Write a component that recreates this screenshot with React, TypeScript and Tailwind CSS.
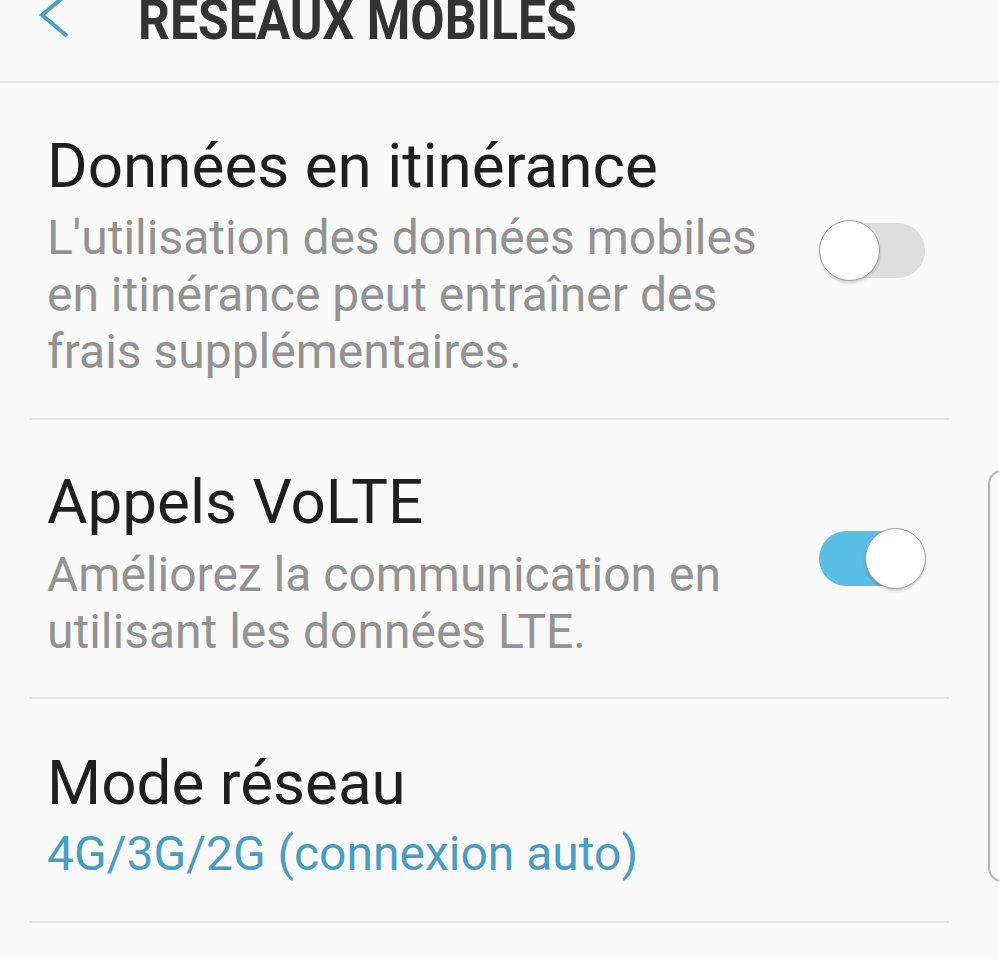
import React from "react";

function Toggle({ on }: { on: boolean }) {
  return (
    <div className={on ? "relative w-[106px] h-[55px] rounded-full bg-[#5bbfe5]" : "relative w-[106px] h-[55px] rounded-full bg-[#dedede]"}>
      <div
        className={
          on
            ? "absolute top-[-3px] right-[-1px] w-[61px] h-[61px] rounded-full bg-white border border-[#9e9e9e] shadow-[0_2px_3px_rgba(0,0,0,0.18)]"
            : "absolute top-[-3px] left-0 w-[61px] h-[61px] rounded-full bg-white border border-[#9e9e9e] shadow-[0_2px_3px_rgba(0,0,0,0.18)]"
        }
      />
    </div>
  );
}

function Row({ title, lines, pt, pb, gap, blue, toggle }: any) {
  return (
    <div className="flex items-center justify-between pl-[18px] pr-[24px] border-b-2 border-[#e6e6e6]">
      <div className="flex flex-col" style={{ paddingTop: pt, paddingBottom: pb }}>
        <div className="text-[62px] leading-[72px] text-[#1f1f1f] whitespace-nowrap">{title}</div>
        <div style={{ marginTop: gap }} className={blue ? "text-[48px] leading-[57px] text-[#4a9dc2] whitespace-nowrap" : "text-[48px] leading-[57px] text-[#939393] whitespace-nowrap"}>
          {lines.map((l: string) => (
            <div key={l}>{l}</div>
          ))}
        </div>
      </div>
      {toggle !== undefined && <Toggle on={toggle} />}
    </div>
  );
}

export default function App() {
  return (
    <div className="relative w-full h-[959px] overflow-hidden bg-[#fafafa] font-['Roboto',sans-serif]">
      {/* barre de titre */}
      <div className="h-[83px] border-b-2 border-[#e5e5e5] flex items-start">
        <svg width="40" height="56" viewBox="0 0 40 56" className="ml-[30px] mt-[-10px] shrink-0">
          <polyline points="37,4 12,25 37,46" fill="none" stroke="#4ba0c2" strokeWidth="4" />
        </svg>
        <div className="ml-[68px] mt-[-8px] text-[56px] leading-[56px] font-bold text-[#333333] whitespace-nowrap scale-x-[0.89] origin-left">
          RESEAUX MOBILES
        </div>
      </div>

      <div className="ml-[29px] w-[920px]">
        <Row
          title="Données en itinérance"
          lines={["L'utilisation des données mobiles", "en itinérance peut entraîner des", "frais supplémentaires."]}
          pt={47}
          gap={7}
          pb={38}
          toggle={false}
        />
        <Row
          title="Appels VoLTE"
          lines={["Améliorez la communication en", "utilisant les données LTE."]}
          pt={46}
          gap={8}
          pb={37}
          toggle={true}
        />
        <Row title="Mode réseau" lines={["4G/3G/2G (connexion auto)"]} pt={48} gap={6} pb={39} blue />
      </div>

      {/* barre de défilement */}
      <div className="absolute left-[988px] top-[470px] w-[30px] h-[412px] rounded-l-[14px] border-2 border-[#b4b4b4]" />
    </div>
  );
}
